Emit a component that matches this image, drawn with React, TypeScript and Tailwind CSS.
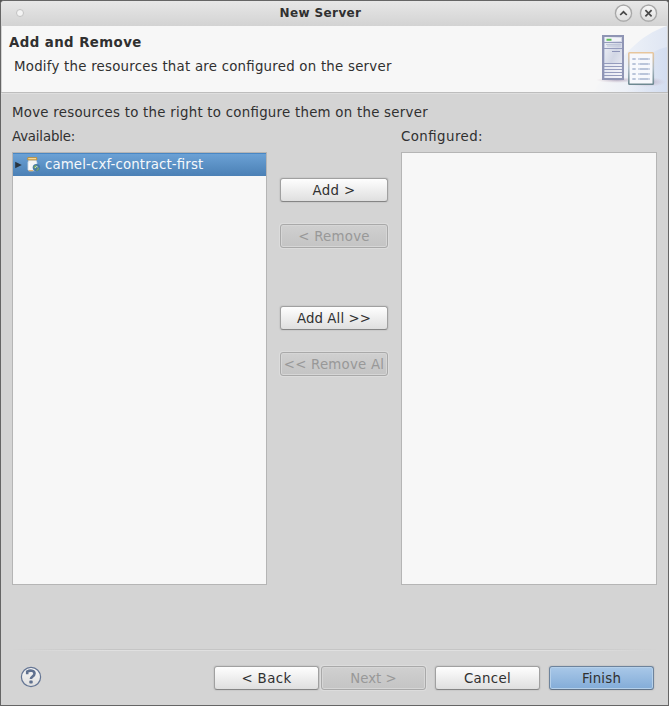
import React from "react";
import clsx from "clsx";

type ButtonProps = { children: React.ReactNode; kind?: "normal" | "disabled" | "primary"; className?: string };

function Button({ children, kind = "normal", className }: ButtonProps) {
  return (
    <button
      className={clsx(
        "flex h-6 shrink-0 items-center justify-center overflow-hidden rounded-[3px] border pt-0.5 whitespace-pre",
        kind === "normal" &&
          "border-[#a0a0a0] border-b-[#858585] bg-linear-to-b from-[#fefefe] to-[#dfdfdf] text-[#303030] shadow-[0_0_1px_1px_#c9c9c9]",
        kind === "disabled" &&
          "border-[#a9a9a9] bg-linear-to-b from-[#d0d0d0] to-[#c4c4c4] text-[#989898] shadow-[0_0_0_1px_#dcdcdc,inset_0_0_0_1px_#d6d6d6]",
        kind === "primary" &&
          "border-[#6d839c] border-b-[#637488] bg-linear-to-b from-[#a9c8e8] to-[#83acd8] text-[#303030] shadow-[0_0_1px_1px_#c9c9c9,inset_0_0_0_1px_#b5d0ea]",
        className,
      )}
    >
      {children}
    </button>
  );
}

function RoundControl({ path }: { path: string }) {
  return (
    <svg width="19" height="19" viewBox="0 0 19 19">
      <circle cx="9.5" cy="9.2" r="9" fill="#cecece" />
      <circle cx="9.5" cy="9.2" r="8" fill="url(#knob)" stroke="#a6a6a6" strokeWidth="1.2" />
      <path d={path} fill="none" stroke="#484848" strokeWidth="1.7" />
    </svg>
  );
}

function ServerBanner() {
  return (
    <svg width="75" height="66" viewBox="0 0 75 66" className="block">
      <defs>
        <linearGradient id="sky" x1="0" y1="0.4" x2="1" y2="0.4">
          <stop offset="0" stopColor="#f7f7f7" />
          <stop offset="0.5" stopColor="#ecf0f7" />
          <stop offset="1" stopColor="#dfe6f3" />
        </linearGradient>
        <linearGradient id="sky2" x1="0" y1="0" x2="1" y2="0">
          <stop offset="0" stopColor="#dce4f3" stopOpacity="0" />
          <stop offset="1" stopColor="#d3ddf0" />
        </linearGradient>
        <linearGradient id="tower" x1="0" y1="0" x2="1" y2="1">
          <stop offset="0" stopColor="#f6f7fb" />
          <stop offset="0.5" stopColor="#d2d7e5" />
          <stop offset="1" stopColor="#f0f1f7" />
        </linearGradient>
        <linearGradient id="sheet" x1="0" y1="0" x2="0" y2="1">
          <stop offset="0" stopColor="#e8c69c" />
          <stop offset="0.5" stopColor="#aebbc4" />
          <stop offset="1" stopColor="#6d8891" />
        </linearGradient>
        <radialGradient id="shade">
          <stop offset="0" stopColor="#8d80a0" stopOpacity="0.6" />
          <stop offset="1" stopColor="#c8aaba" stopOpacity="0" />
        </radialGradient>
      </defs>
      <path d="M75 0C47 9 32 29 0 66H75Z" fill="url(#sky)" />
      <path d="M75 21C55 25 43 42 34 66H75Z" fill="url(#sky2)" />
      <ellipse cx="25" cy="54" rx="21" ry="3" fill="url(#shade)" />
      <ellipse cx="54" cy="56" rx="20" ry="5" fill="url(#shade)" />
      <rect x="11" y="10" width="20" height="43" fill="url(#tower)" stroke="#8f95b4" strokeWidth="2" />
      <path d="M12.5 11V52" stroke="#c3cbe0" />
      <rect x="13" y="12" width="16" height="3" fill="#f2f3f8" />
      <path d="M14.5 13.7h5" stroke="#5fbd59" strokeWidth="2" />
      <path d="M12 16.5h18M12 22.5h18M12 37.5h18M12 40.5h18M12 43.5h18M12 46.5h18M12 49.5h18" stroke="#959cbd" />
      <path d="M14 18.5h15M15 20h14" stroke="#bfc6d9" />
      <path d="M13 39h16M13 42h16M13 45h16M13 48h16M13 51h16" stroke="#fafafd" />
      <path d="M20 25.5h8" stroke="#8d94b8" strokeWidth="1.2" />
      <rect x="36.8" y="26.8" width="24.5" height="31.4" rx="0.7" fill="#f7f8fc" stroke="url(#sheet)" strokeWidth="1.6" />
      <path d="M40 33h4M40 38h4M40 43h4M40 48h4M40 53h4M46 33h12M46 38h12M46 43h12M46 48h12M46 53h12" stroke="#cdd5e6" strokeWidth="2" />
      <path d="M41 33h2M41 38h2M41 43h2M41 48h2M41 53h2M48 33h8M48 38h8M48 43h8M48 48h8M48 53h8" stroke="#a7b4cd" />
    </svg>
  );
}

function ModuleIcon() {
  return (
    <svg width="15" height="16" viewBox="0 0 15 16" className="block">
      <path d="M2.8 3.2L2 5.5v7l1 1.2h6.8l1-1.2v-7L10 3.2z" fill="#f5f6f6" stroke="#d7e0e9" strokeWidth="0.8" />
      <path d="M1.8 0.7h8.9v2.1H1.8z" fill="#ffe9b0" stroke="#c38a25" strokeWidth="0.9" />
      <path d="M3.5 6v6" stroke="#ffffff" />
      <path d="M2.7 13.6h4.5" stroke="#e0b677" strokeWidth="1.2" />
      <circle cx="10.4" cy="10.6" r="3.7" fill="#4479a9" />
      <path d="M7.2 10l2.5-2.3 1.5 1.2-2 3zM10 13.6l2.2-3 1.4.5-1.8 2.6z" fill="#78a465" />
      <path d="M9 11l1.2-1.4 1.6.4" stroke="#cee9da" strokeWidth="0.9" fill="none" />
    </svg>
  );
}

function HelpIcon() {
  return (
    <svg width="22" height="22" viewBox="0 0 22 22" className="block">
      <circle cx="11" cy="11" r="9.6" fill="url(#knob)" stroke="#647594" strokeWidth="1.2" />
      <path d="M7.2 8.2V5.6C10 4 14.5 4.3 14.5 7.5c0 3-3.6 2.9-3.6 5.6" fill="none" stroke="#60718f" strokeWidth="2.6" />
      <rect x="9.3" y="14.6" width="3.4" height="3" rx="0.8" fill="#60718f" />
    </svg>
  );
}

export default function App() {
  return (
    <div className="h-[706px] w-[669px] bg-[#555]">
      <div className="flex h-full w-full flex-col overflow-hidden rounded-t-[4px] border border-[#656565] bg-[#d4d4d4] font-['DejaVu_Sans',sans-serif] text-[13.333px] leading-4 text-[#303030] [font-feature-settings:'liga']">
        <svg width="0" height="0" className="absolute">
          <defs>
            <linearGradient id="knob" x1="0" y1="0" x2="0" y2="1">
              <stop offset="0" stopColor="#f8f8f8" />
              <stop offset="1" stopColor="#dedede" />
            </linearGradient>
          </defs>
        </svg>
        <div className="grid h-[25px] shrink-0 grid-cols-[1fr_auto_1fr] items-center bg-linear-to-b from-[#e7e7e7] to-[#d3d3d3]">
          <div className="mb-px ml-[15px] size-2 rounded-full border border-[#c2c2c2] bg-[#f4f4f4]" />
          <h1 className="mr-[28px] pb-[2px] text-[12px] font-bold tracking-[0.38px]">New Server</h1>
          <div className="mr-[10px] flex justify-end gap-[6px]">
            <RoundControl path="M6.2 11l3.3-3.2 3.3 3.2" />
            <RoundControl path="M6.4 6.1l6.2 6.2M12.6 6.1l-6.2 6.2" />
          </div>
        </div>
        <header className="mx-px flex h-[66px] shrink-0 justify-between bg-[#f7f7f7]">
          <div className="pl-[7px]">
            <h2 className="mt-[9px] font-bold tracking-[0.43px]">Add and Remove</h2>
            <p className="mt-2 ml-[5px] tracking-[0.24px]">Modify the resources that are configured on the server</p>
          </div>
          <ServerBanner />
        </header>
        <div className="h-0.5 shrink-0 border-t border-b border-t-[#bdbdbd] border-b-[#dedede]" />
        <main className="h-[555px] shrink-0 px-[11px] pt-[11px]">
          <p className="tracking-[0.26px]">Move resources to the right to configure them on the server</p>
          <div className="mt-2 grid grid-cols-[255px_1fr_256px]">
            <section>
              <p className="tracking-[-0.18px]">Available:</p>
              <div className="mt-[7px] h-[433px] border border-[#b5b5b5] bg-[#f7f7f7]">
                <div className="flex h-[23px] items-center border-t border-[#4987c4] bg-linear-to-b from-[#6ba1d5] to-[#4b80b5] text-[#f5f8fb]">
                  <svg width="7" height="8" viewBox="0 0 7 8" className="ml-[2px]">
                    <path d="M.2 .8l6.6 3.2-6.6 3.2z" fill="#2a3540" />
                  </svg>
                  <div className="ml-[4px]"><ModuleIcon /></div>
                  <span className="ml-[4px] tracking-[0.13px]">camel-cxf-contract-first</span>
                </div>
              </div>
            </section>
            <div className="flex flex-col items-center pt-[49px]">
              <Button className="w-[108px] tracking-[0.4px]">Add &gt;</Button>
              <Button kind="disabled" className="mt-[22px] w-[108px] tracking-[0.25px]">&lt; Remove</Button>
              <Button className="mt-[58px] w-[108px] tracking-[0.1px]">Add All &gt;&gt;</Button>
              <Button kind="disabled" className="mt-[22px] w-[108px] tracking-[0.23px]">&lt;&lt; Remove Al</Button>
            </div>
            <section>
              <p className="tracking-[0.45px]">Configured:</p>
              <div className="mt-[7px] h-[433px] border border-[#b5b5b5] bg-[#f7f7f7]" />
            </section>
          </div>
        </main>
        <div className="mx-[11px] h-0.5 shrink-0 bg-linear-to-b from-[#c5c5c5] from-50% to-[#e0e0e0] to-50% mask-x-from-85% mask-x-to-100%" />
        <footer className="flex flex-1 items-start pt-[15px] pr-[14px] pl-[19px]">
          <HelpIcon />
          <Button className="ml-auto w-[105px] tracking-[0.4px]">&lt; Back</Button>
          <Button kind="disabled" className="ml-[2px] w-[105px]">Next &gt;</Button>
          <Button className="ml-[9px] w-[105px] tracking-[0.3px]">Cancel</Button>
          <Button kind="primary" className="ml-[9px] w-[105px] tracking-[0.2px]">Finish</Button>
        </footer>
      </div>
    </div>
  );
}
